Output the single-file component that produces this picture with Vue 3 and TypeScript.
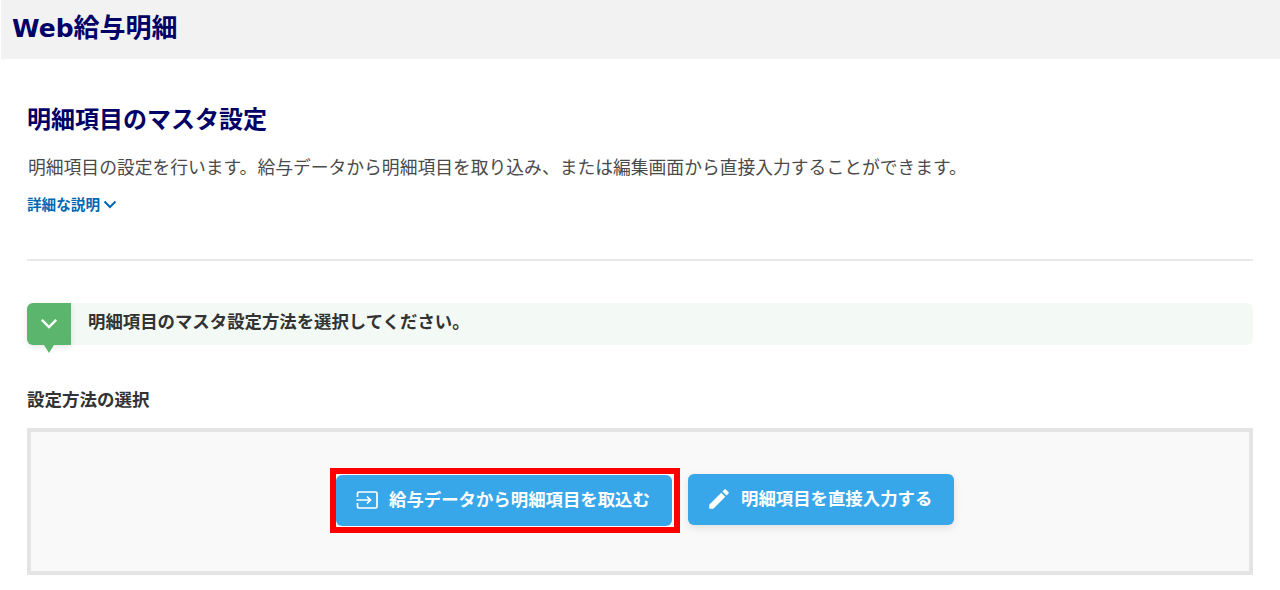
<script setup lang="ts">
</script>

<template>
  <div class="page">
    <header class="app-header">
      <span class="app-title"><span class="app-title-latin">Web</span>給与明細</span>
    </header>

    <main class="content">
      <section class="intro">
        <h1 class="page-title">明細項目のマスタ設定</h1>
        <p class="lead">明細項目の設定を行います。給与データから明細項目を取り込み、または編集画面から直接入力することができます。</p>
        <a class="more">
          詳細な説明
          <svg class="more-icon" viewBox="0 0 14 14" width="14" height="14" aria-hidden="true">
            <path d="M1.5 4.5 L7 10 L12.5 4.5" fill="none" stroke="currentColor" stroke-width="2" />
          </svg>
        </a>
      </section>

      <hr class="divider" />

      <div class="step">
        <div class="step-badge">
          <svg viewBox="0 0 18 18" width="18" height="18" aria-hidden="true">
            <path d="M1.8 4.8 L9 12 L16.2 4.8" fill="none" stroke="#fff" stroke-width="2.4" />
          </svg>
        </div>
        <span class="step-text">明細項目のマスタ設定方法を選択してください。</span>
      </div>

      <h2 class="section-label">設定方法の選択</h2>

      <div class="choice-box">
        <div class="highlight">
          <button class="action wide" type="button">
            <svg viewBox="0 0 24 24" width="24" height="24" aria-hidden="true">
              <path
                d="M2.5 9 V5.5 A1.5 1.5 0 0 1 4 4 H20.5 A1.5 1.5 0 0 1 22 5.5 V18.5 A1.5 1.5 0 0 1 20.5 20 H4 A1.5 1.5 0 0 1 2.5 18.5 V15"
                fill="none"
                stroke="#fff"
                stroke-width="1.7"
              />
              <path d="M1.5 12 H15.5 M12 8.5 L15.5 12 L12 15.5" fill="none" stroke="#fff" stroke-width="1.7" />
            </svg>
            <span class="action-label">給与データから明細項目を取込む</span>
          </button>
        </div>
        <button class="action direct" type="button">
          <svg viewBox="0 0 24 24" width="26" height="26" aria-hidden="true">
            <path
              fill="#fff"
              d="M3 17.25V21h3.75L17.81 9.94l-3.75-3.75L3 17.25zM20.71 7.04a1 1 0 0 0 0-1.41l-2.34-2.34a1 1 0 0 0-1.41 0l-1.83 1.83 3.75 3.75 1.83-1.83z"
            />
          </svg>
          <span class="action-label">明細項目を直接入力する</span>
        </button>
      </div>
    </main>
  </div>
</template>

<style>
html,
body {
  margin: 0;
  background: #fff;
}
</style>

<style scoped>
.page {
  width: 1280px;
  height: 590px;
  overflow: hidden;
  font-family: "Noto Sans CJK JP", "Liberation Sans", sans-serif;
  color: #333;
}
.app-header {
  display: flex;
  align-items: center;
  box-sizing: border-box;
  height: 59px;
  margin-left: 1px;
  padding: 0 0 5px 11px;
  background: #f2f2f2;
}
.app-title {
  font-size: 26px;
  font-weight: 700;
  line-height: 1;
  color: #000066;
}
.app-title-latin {
  font-family: "DejaVu Sans", sans-serif;
  font-size: 25px;
}
.content {
  padding: 0 27px;
}
.intro {
  padding-top: 44px;
}
.page-title {
  margin: 0;
  font-size: 24px;
  line-height: 30px;
  font-weight: 700;
  color: #000066;
}
.lead {
  margin: 20px 0 0;
  padding-left: 1px;
  font-size: 17.8px;
  line-height: 26px;
  color: #4a4a4a;
  white-space: nowrap;
}
.more {
  display: flex;
  align-items: center;
  gap: 3px;
  margin-top: 15px;
  font-size: 14.6px;
  line-height: 20px;
  font-weight: 700;
  color: #0068b3;
}
.divider {
  height: 2px;
  margin: 45px 0 0;
  border: 0;
  background: #e8e8e8;
}
.step {
  display: flex;
  align-items: center;
  gap: 17px;
  height: 42px;
  margin-top: 42px;
  border-radius: 6px;
  background: #f3faf5;
}
.step-badge {
  position: relative;
  display: flex;
  align-items: center;
  justify-content: center;
  width: 44px;
  height: 100%;
  border-radius: 6px 0 0 6px;
  background: #5cb56d;
  box-shadow: 0 2px 6px rgba(0, 0, 0, 0.1);
}
.step-badge::after {
  content: "";
  position: absolute;
  left: 17px;
  bottom: -8px;
  border-style: solid;
  border-width: 8px 5px 0;
  border-color: #5cb56d transparent transparent;
}
.step-text {
  padding-bottom: 7px;
  font-size: 17.4px;
  font-weight: 700;
  color: #333;
}
.section-label {
  margin: 42px 0 0;
  font-size: 17.5px;
  line-height: 24px;
  font-weight: 700;
  color: #333;
}
.choice-box {
  display: flex;
  align-items: center;
  justify-content: center;
  gap: 8px;
  box-sizing: border-box;
  height: 147px;
  margin-top: 17px;
  padding: 0 0 3px 4px;
  border: 4px solid #e4e4e4;
  background: #f9f9f9;
}
.highlight {
  display: flex;
  padding: 1px 2px 1px 0;
  border: 6px solid #ff0000;
  background: #fff;
}
.action {
  display: flex;
  align-items: center;
  gap: 9px;
  box-sizing: border-box;
  width: 266px;
  height: 51px;
  padding: 0 0 0 18px;
  border: 0;
  border-radius: 6px;
  background: #38a7ea;
  box-shadow: 0 3px 8px rgba(0, 0, 0, 0.1);
  font-family: inherit;
  font-size: 17.4px;
  font-weight: 700;
  color: #fff;
}
.action-label {
  padding-bottom: 4px;
}
.action.direct {
  margin-bottom: 2px;
}
.action.wide {
  gap: 10px;
  width: 336px;
  padding-left: 19px;
  box-shadow: none;
}
</style>
